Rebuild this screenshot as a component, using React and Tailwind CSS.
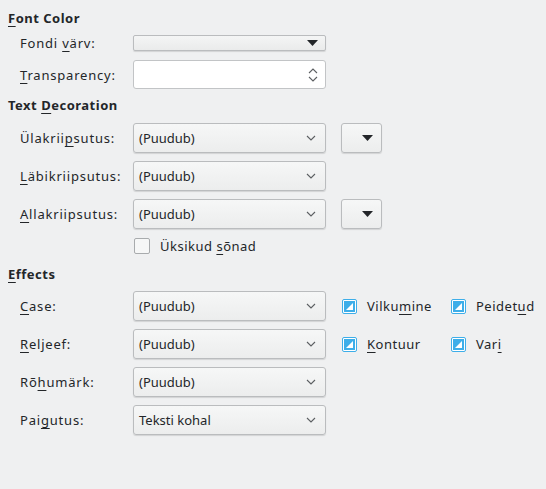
import React from 'react'

const font = { fontFamily: '"Noto Sans", "DejaVu Sans", sans-serif' }

function Mn({ pre = '', k, post = '' }) {
  return (
    <span>
      {pre}
      <span className="underline underline-offset-[3px] decoration-1">{k}</span>
      {post}
    </span>
  )
}

function Header({ children, className = '' }) {
  return (
    <div className={`h-[18px] pl-[8px] flex items-center font-bold text-[13px] tracking-[0.5px] text-[#232629] ${className}`}>
      <span>{children}</span>
    </div>
  )
}

function Chevron() {
  return (
    <svg width="10" height="6" viewBox="0 0 10 6" className="shrink-0">
      <path d="M1 1 L5 5 L9 1" fill="none" stroke="#5c5f62" strokeWidth="1.1" />
    </svg>
  )
}

function Tri() {
  return (
    <svg width="11" height="6" viewBox="0 0 11 6" className="shrink-0">
      <path d="M0 0 L11 0 L5.5 6 Z" fill="#232629" />
    </svg>
  )
}

function Combo({ text }) {
  return (
    <div className="w-[193px] h-[30px] flex items-center justify-between pl-[5px] pr-[9px] rounded-[3px] border border-[#babcbe] bg-gradient-to-b from-[#f6f7f7] to-[#eceded] shadow-[0_1px_1px_rgba(0,0,0,0.12)]">
      <span>{text}</span>
      <Chevron />
    </div>
  )
}

function SideButton() {
  return (
    <div className="ml-[15px] w-[41px] h-[30px] flex items-center justify-end pr-[8px] rounded-[3px] border border-[#babcbe] bg-gradient-to-b from-[#f6f7f7] to-[#eceded] shadow-[0_1px_1px_rgba(0,0,0,0.12)]">
      <Tri />
    </div>
  )
}

function Row({ label, children, className = '' }) {
  return (
    <div className={`h-[30px] flex items-center pl-[20px] ${className}`}>
      <div className="w-[113px] tracking-[0.8px]">{label}</div>
      {children}
    </div>
  )
}

function TriCheck() {
  return (
    <div className="w-[15px] h-[15px] border border-[#3daee9] rounded-[2px] p-[1px] bg-white shrink-0">
      <div className="w-full h-full bg-[#3daee9] flex items-end justify-end p-[2px]">
        <svg width="7" height="7" viewBox="0 0 7 7">
          <path d="M7 0 L7 7 L0 7 Z" fill="#ffffff" />
        </svg>
      </div>
    </div>
  )
}

function Check({ label, className = '' }) {
  return (
    <div className={`flex items-center ${className}`}>
      <TriCheck />
      <span className="ml-[10px] tracking-[0.5px]">{label}</span>
    </div>
  )
}

export default function App() {
  return (
    <div className="w-[546px] h-[489px] bg-[#eff0f1] text-[#232629] text-[13px] leading-[18px] pt-[9px]" style={font}>
      <Header><Mn k="F" post="ont Color" /></Header>

      <div className="mt-[8px] h-[16px] flex items-center pl-[20px]">
        <div className="w-[113px] tracking-[0.8px]"><Mn pre="Fondi " k="v" post="ärv:" /></div>
        <div className="w-[193px] h-[16px] flex items-center justify-end pr-[7px] rounded-[2px] border border-[#babcbe] bg-gradient-to-b from-[#f4f5f5] to-[#eaebeb] shadow-[0_1px_1px_rgba(0,0,0,0.12)]">
          <Tri />
        </div>
      </div>

      <div className="mt-[9px] h-[29px] flex items-center pl-[20px]">
        <div className="w-[113px] tracking-[0.8px]"><Mn k="T" post="ransparency:" /></div>
        <div className="w-[193px] h-[29px] flex items-center justify-end pr-[6px] rounded-[3px] border border-[#c2c4c6] bg-white">
          <svg width="12" height="20" viewBox="0 0 12 20">
            <path d="M2 8 L6 4 L10 8" fill="none" stroke="#5c5f62" strokeWidth="1.1" />
            <path d="M2 12 L6 16 L10 12" fill="none" stroke="#5c5f62" strokeWidth="1.1" />
          </svg>
        </div>
      </div>

      <Header className="mt-[7px]">Text <Mn k="D" post="ecoration" /></Header>

      <Row className="mt-[9px]" label={<Mn pre="Ülakrii" k="p" post="sutus:" />}>
        <Combo text="(Puudub)" />
        <SideButton />
      </Row>
      <Row className="mt-[8px]" label={<Mn k="L" post="äbikriipsutus:" />}>
        <Combo text="(Puudub)" />
      </Row>
      <Row className="mt-[8px]" label={<Mn k="A" post="llakriipsutus:" />}>
        <Combo text="(Puudub)" />
        <SideButton />
      </Row>

      <div className="mt-[9px] h-[16px] flex items-center pl-[134px]">
        <div className="w-[16px] h-[16px] border border-[#a8abad] rounded-[2px] bg-[#f6f7f7]" />
        <span className="ml-[10px] tracking-[0.5px]">Üksikud <Mn k="s" post="õnad" /></span>
      </div>

      <Header className="mt-[11px]"><Mn k="E" post="ffects" /></Header>

      <Row className="mt-[8px]" label={<Mn k="C" post="ase:" />}>
        <Combo text="(Puudub)" />
        <Check className="ml-[16px] w-[109px]" label={<Mn pre="Vilku" k="m" post="ine" />} />
        <Check label={<Mn pre="Peidet" k="u" post="d" />} />
      </Row>
      <Row className="mt-[8px]" label={<Mn k="R" post="eljeef:" />}>
        <Combo text="(Puudub)" />
        <Check className="ml-[16px] w-[109px]" label={<Mn k="K" post="ontuur" />} />
        <Check label={<Mn pre="Var" k="i" />} />
      </Row>
      <Row className="mt-[8px]" label={<Mn pre="Rõ" k="h" post="umärk:" />}>
        <Combo text="(Puudub)" />
      </Row>
      <Row className="mt-[8px]" label={<Mn pre="Pai" k="g" post="utus:" />}>
        <Combo text="Teksti kohal" />
      </Row>
    </div>
  )
}
